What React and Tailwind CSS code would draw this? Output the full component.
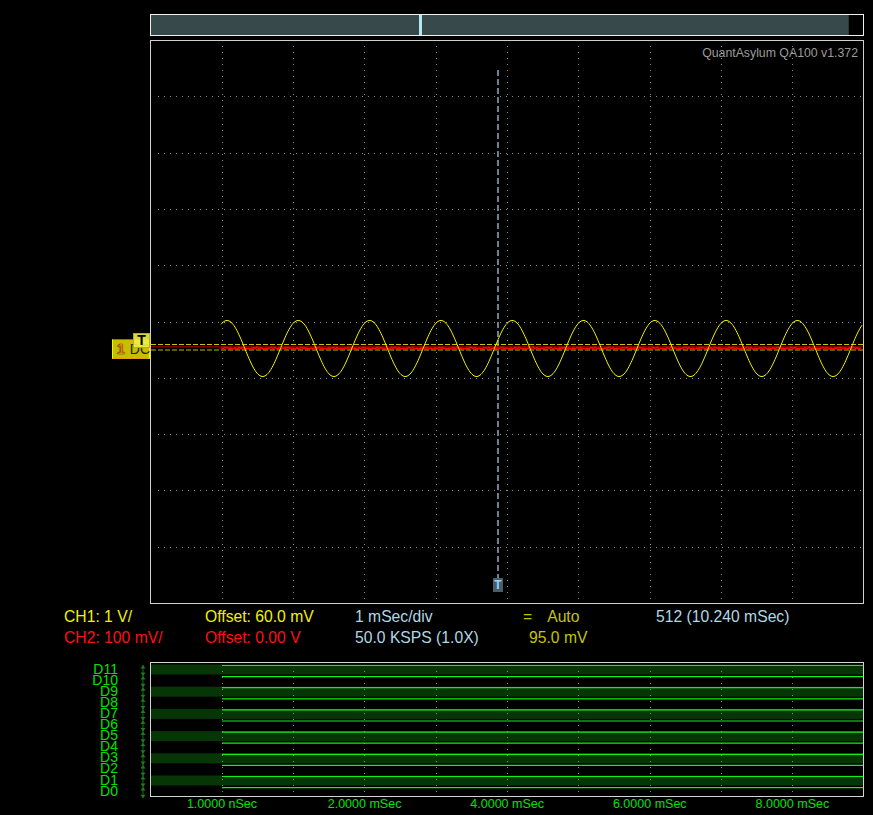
import React from 'react';

// grid positions in page coordinates (the svgs use a page-offset viewBox)
const VX = [1, 2, 3, 4, 5, 6, 7, 8, 9].map((k) => Math.round(150.5 + 71.3 * k));
const HY = [1, 2, 3, 4, 5, 6, 7, 8, 9].map((k) => Math.round(40 + 56.3 * k));

const CHANNELS = ['D11', 'D10', 'D9', 'D8', 'D7', 'D6', 'D5', 'D4', 'D3', 'D2', 'D1', 'D0'];
const TIME_LABELS = ['1.0000 nSec', '2.0000 mSec', '4.0000 mSec', '6.0000 mSec', '8.0000 mSec'];

const sinePath = () => {
    let d = '';
    for (let x = 221; x <= 862; x += 1) {
        const y = 348.5 - 28 * Math.cos((2 * Math.PI * (x - 227)) / 71.3);
        d += `${x === 221 ? 'M' : 'L'}${x} ${y.toFixed(2)} `;
    }
    return d;
};

const noisePath = () => {
    let d = '';
    for (let x = 221; x <= 862; x += 2) {
        const y = 348.2 + Math.sin(x * 1.73) * 0.7 + Math.sin(x * 0.41) * 0.4;
        d += `${x === 221 ? 'M' : 'L'}${x} ${y.toFixed(2)} `;
    }
    return d;
};

const ScopeGrid = () => (
    <svg width="712" height="562" viewBox="151 41 712 562" className="block">
        {/* dotted grid */}
        {VX.map((x) => (
            <line key={`v${x}`} x1={x + 0.5} y1={46} x2={x + 0.5} y2={603} stroke="#8c8c8c" strokeDasharray="1 5" />
        ))}
        {HY.map((y) => (
            <line key={`h${y}`} x1={158} y1={y + 0.5} x2={863} y2={y + 0.5} stroke="#8c8c8c" strokeDasharray="1 5" />
        ))}

        {/* trigger line */}
        <line x1={498} y1={70} x2={498} y2={578} stroke="#6c808e" strokeWidth="2" strokeDasharray="6 3" />

        {/* reference / offset lines */}
        <line x1={151} y1={344.5} x2={863} y2={344.5} stroke="#c8c800" strokeDasharray="5 2" />
        <line x1={151} y1={346.8} x2={863} y2={346.8} stroke="#7c0000" strokeWidth="1.5" />
        <path d={noisePath()} fill="none" stroke="#ff0000" strokeWidth="1.6" />
        <line x1={151} y1={350} x2={863} y2={350} stroke="#5c5c00" strokeWidth="2" strokeDasharray="5 2" />

        {/* channel 1 wave */}
        <path d={sinePath()} fill="none" stroke="#f4f400" strokeWidth="1" />
    </svg>
);

const DigitalArrows = () => {
    const pts = Array.from({ length: 13 }, (_, k) => 665 + 11.1 * k);
    return (
        <svg width="32" height="135" viewBox="118 662 32 135" className="block overflow-visible">
            <line x1={143} y1={665} x2={143} y2={798} stroke="#1c6a1c" strokeWidth="1" />
            {pts.map((p, k) => (
                <g key={k} fill="#1f7a1f">
                    {k > 0 && <polygon points={`140.5,${p - 3.5} 145.5,${p - 3.5} 143,${p}`} />}
                    {k < 12 && <polygon points={`143,${p} 140.5,${p + 3.5} 145.5,${p + 3.5}`} />}
                </g>
            ))}
        </svg>
    );
};

const DigitalTraces = () => (
    <svg width="712" height="133" viewBox="151 663 712 133" className="block">
        {[0, 1, 2, 3, 4, 5].map((k) => (
            <rect key={k} x={151} y={664.5 + 22.2 * k} width={712} height={10} fill="#063606" />
        ))}
        {VX.map((x) => (
            <line key={x} x1={x + 0.5} y1={665} x2={x + 0.5} y2={796} stroke="#8c8c8c" strokeDasharray="1 5" />
        ))}
        {CHANNELS.map((c, k) => (
            <line key={c} x1={222} y1={665.5 + 11.1 * k} x2={863} y2={665.5 + 11.1 * k} stroke="#12f212" strokeWidth="1.2" />
        ))}
    </svg>
);

const App = () => {
    return (
        <div className="min-h-screen bg-black">
            <div className="relative w-[873px] h-[815px] bg-black overflow-hidden font-['Liberation_Sans',Arial,sans-serif]">
                {/* scroll / position bar */}
                <div className="ml-[150px] mt-[14px] w-[714px] h-[22px] border border-[#f0f0f0] flex">
                    <div className="w-[268px] bg-[#38494b]" />
                    <div className="w-[3px] bg-[#b6e6ee]" />
                    <div className="w-[427px] bg-[#38494b] border-r border-[#2a3638]" />
                    <div className="flex-1 bg-black" />
                </div>

                {/* scope display */}
                <div className="relative ml-[150px] mt-[4px] w-[714px] h-[564px] border border-[#cfcfcf]">
                    <ScopeGrid />
                    <div className="absolute right-[5px] top-[5px] text-[12.3px] leading-[14px] text-[#9c9c9c] whitespace-nowrap">
                        QuantAsylum QA100 v1.372
                    </div>
                    {/* trigger position marker */}
                    <div className="absolute left-[342px] top-[537px] w-[10px] h-[14px] bg-[#4a5c67] text-[#8fd4ff] text-[12px] font-bold leading-[14px] text-center">
                        T
                    </div>
                </div>

                {/* channel 1 marker + trigger level */}
                <div className="absolute left-[112px] top-[339px] w-[38px] h-[20px] bg-[#c4c000] border border-[#f4f400] border-t-[#ff3030] border-b-[#e8a000] flex items-center pl-[4px] text-[14px] leading-none">
                    <span className="font-bold text-[#ff7a00] [text-shadow:0_0_1px_#000,0_0_1px_#000]">1</span>
                    <span className="ml-[5px] text-[#262600]">DC</span>
                </div>
                <div className="absolute left-[133px] top-[333px] w-[17px] h-[15px] bg-[#f0f048]/90 border border-[#b4b400] text-black font-bold text-[14px] leading-[13px] text-center">
                    T
                </div>

                {/* status readout */}
                <div className="mt-[2px] pl-[64px] text-[15.7px] leading-[21px] whitespace-pre">
                    <div className="flex">
                        <span className="w-[141px] shrink-0 text-[#f2f200]">CH1: 1 V/</span>
                        <span className="w-[150px] shrink-0 text-[#f2f200]">Offset: 60.0 mV</span>
                        <span className="w-[168px] shrink-0 text-[#add8e6]">1 mSec/div</span>
                        <span className="w-[133px] shrink-0 text-[#c4c400]">
                            =<span className="ml-[15px]">Auto</span>
                        </span>
                        <span className="text-[#add8e6]">512 (10.240 mSec)</span>
                    </div>
                    <div className="flex">
                        <span className="w-[141px] shrink-0 text-[#ff1010]">CH2: 100 mV/</span>
                        <span className="w-[150px] shrink-0 text-[#ff1010]">Offset: 0.00 V</span>
                        <span className="w-[168px] shrink-0 text-[#add8e6]">50.0 KSPS (1.0X)</span>
                        <span className="pl-[6px] text-[#c4c400]">95.0 mV</span>
                    </div>
                </div>

                {/* logic analyzer */}
                <div className="mt-[14px] flex h-[135px]">
                    <div className="w-[118px] pt-[1.6px] text-right text-[14px] leading-[11.1px] text-[#00e400]">
                        {CHANNELS.map((c) => (
                            <div key={c}>{c}</div>
                        ))}
                    </div>
                    <DigitalArrows />
                    <div className="w-[714px] h-[135px] border border-[#d4d4d4]">
                        <DigitalTraces />
                    </div>
                </div>
                <div className="ml-[150.7px] flex text-[12.5px] leading-[14px] text-[#00e400]">
                    {TIME_LABELS.map((t) => (
                        <div key={t} className="w-[142.6px] shrink-0 text-center whitespace-nowrap">{t}</div>
                    ))}
                </div>
            </div>
        </div>
    );
};

export default App;
